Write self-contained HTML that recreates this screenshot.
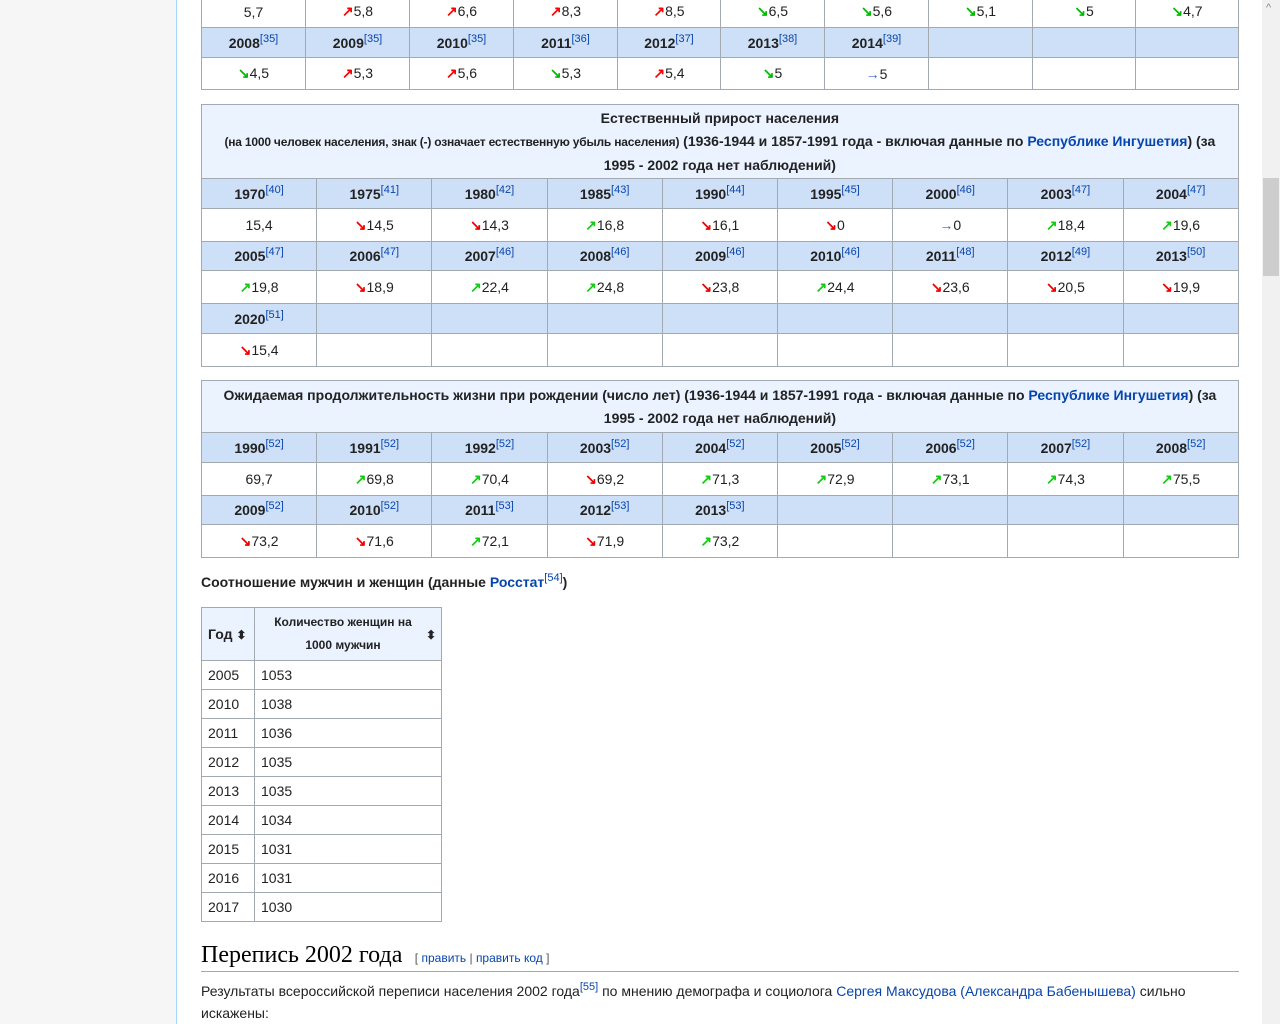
<!DOCTYPE html>
<html><head><meta charset="utf-8"><style>
body{margin:0;width:1280px;height:1024px;overflow:hidden;background:#f6f6f6;font-family:"Liberation Sans",sans-serif;color:#222;position:relative}
#content{position:absolute;left:176px;top:0;width:1086px;height:1024px;background:#fff;border-left:1px solid #a7d7f9}
#sb{position:absolute;left:1262px;top:0;width:18px;height:1024px;background:#f1f1f1}
#thumb{position:absolute;left:1263px;top:178px;width:16px;height:98px;background:#cdcdcd}
table{position:absolute;border-collapse:collapse;table-layout:fixed;font-size:14px}
td,th{border:1px solid #a2a9b1;text-align:center;padding:0;overflow:hidden;white-space:nowrap}
th{background:#cee0f8;font-weight:bold;font-size:14px}
tr.h{height:30px} tr.d{height:32px}
sup{font-size:11px;color:#0645ad;font-weight:normal;vertical-align:6px;line-height:0}
.u,.dn,.ug,.dr,.r{font-weight:bold}
.u{color:#f00}.dn{color:#0b0}.ug{color:#1c1}.dr{color:#e00}.r{color:#36c;font-weight:normal}
a{color:#0645ad;text-decoration:none}
.cap{background:#eaf3ff;font-weight:bold;line-height:23px;white-space:normal;padding:0 6px}
</style></head><body>
<div id="content"></div><div id="sb"><div style="position:absolute;left:4px;top:2px;font-size:11px;color:#888">^</div></div><div id="thumb"></div>

<table style="left:201px;top:-5px;width:1037px">
<colgroup><col style="width:104px"><col style="width:104px"><col style="width:104px"><col style="width:104px"><col style="width:103px"><col style="width:104px"><col style="width:104px"><col style="width:104px"><col style="width:103px"><col style="width:103px"></colgroup>
<tr class="d"><td>5,7</td><td><span class="u">↗</span>5,8</td><td><span class="u">↗</span>6,6</td><td><span class="u">↗</span>8,3</td><td><span class="u">↗</span>8,5</td><td><span class="dn">↘</span>6,5</td><td><span class="dn">↘</span>5,6</td><td><span class="dn">↘</span>5,1</td><td><span class="dn">↘</span>5</td><td><span class="dn">↘</span>4,7</td></tr>
<tr class="h"><th>2008<sup>[35]</sup></th><th>2009<sup>[35]</sup></th><th>2010<sup>[35]</sup></th><th>2011<sup>[36]</sup></th><th>2012<sup>[37]</sup></th><th>2013<sup>[38]</sup></th><th>2014<sup>[39]</sup></th><th></th><th></th><th></th></tr>
<tr class="d"><td><span class="dn">↘</span>4,5</td><td><span class="u">↗</span>5,3</td><td><span class="u">↗</span>5,6</td><td><span class="dn">↘</span>5,3</td><td><span class="u">↗</span>5,4</td><td><span class="dn">↘</span>5</td><td><span class="r">→</span>5</td><td></td><td></td><td></td></tr>
</table>

<table style="left:201px;top:104px;width:1037px">
<colgroup><col span="9" style="width:115.2px"></colgroup>
<tr style="height:74px"><td colspan="9" class="cap">Естественный прирост населения<br><span style="font-size:12px;letter-spacing:-0.2px">(на 1000 человек населения, знак (-) означает естественную убыль населения)</span> (1936-1944 и 1857-1991 года - включая данные по <a>Республике Ингушетия</a>) (за<br>1995 - 2002 года нет наблюдений)</td></tr>
<tr class="h"><th>1970<sup>[40]</sup></th><th>1975<sup>[41]</sup></th><th>1980<sup>[42]</sup></th><th>1985<sup>[43]</sup></th><th>1990<sup>[44]</sup></th><th>1995<sup>[45]</sup></th><th>2000<sup>[46]</sup></th><th>2003<sup>[47]</sup></th><th>2004<sup>[47]</sup></th></tr>
<tr style="height:33px"><td>15,4</td><td><span class="dr">↘</span>14,5</td><td><span class="dr">↘</span>14,3</td><td><span class="ug">↗</span>16,8</td><td><span class="dr">↘</span>16,1</td><td><span class="dr">↘</span>0</td><td><span class="r">→</span>0</td><td><span class="ug">↗</span>18,4</td><td><span class="ug">↗</span>19,6</td></tr>
<tr style="height:29px"><th>2005<sup>[47]</sup></th><th>2006<sup>[47]</sup></th><th>2007<sup>[46]</sup></th><th>2008<sup>[46]</sup></th><th>2009<sup>[46]</sup></th><th>2010<sup>[46]</sup></th><th>2011<sup>[48]</sup></th><th>2012<sup>[49]</sup></th><th>2013<sup>[50]</sup></th></tr>
<tr style="height:33px"><td><span class="ug">↗</span>19,8</td><td><span class="dr">↘</span>18,9</td><td><span class="ug">↗</span>22,4</td><td><span class="ug">↗</span>24,8</td><td><span class="dr">↘</span>23,8</td><td><span class="ug">↗</span>24,4</td><td><span class="dr">↘</span>23,6</td><td><span class="dr">↘</span>20,5</td><td><span class="dr">↘</span>19,9</td></tr>
<tr class="h"><th>2020<sup>[51]</sup></th><th></th><th></th><th></th><th></th><th></th><th></th><th></th><th></th></tr>
<tr style="height:33px"><td><span class="dr">↘</span>15,4</td><td></td><td></td><td></td><td></td><td></td><td></td><td></td><td></td></tr>
</table>

<table style="left:201px;top:380px;width:1037px">
<colgroup><col span="9" style="width:115.2px"></colgroup>
<tr style="height:52px"><td colspan="9" class="cap">Ожидаемая продолжительность жизни при рождении (число лет) (1936-1944 и 1857-1991 года - включая данные по <a>Республике Ингушетия</a>) (за<br>1995 - 2002 года нет наблюдений)</td></tr>
<tr class="h"><th>1990<sup>[52]</sup></th><th>1991<sup>[52]</sup></th><th>1992<sup>[52]</sup></th><th>2003<sup>[52]</sup></th><th>2004<sup>[52]</sup></th><th>2005<sup>[52]</sup></th><th>2006<sup>[52]</sup></th><th>2007<sup>[52]</sup></th><th>2008<sup>[52]</sup></th></tr>
<tr style="height:33px"><td>69,7</td><td><span class="ug">↗</span>69,8</td><td><span class="ug">↗</span>70,4</td><td><span class="dr">↘</span>69,2</td><td><span class="ug">↗</span>71,3</td><td><span class="ug">↗</span>72,9</td><td><span class="ug">↗</span>73,1</td><td><span class="ug">↗</span>74,3</td><td><span class="ug">↗</span>75,5</td></tr>
<tr style="height:29px"><th>2009<sup>[52]</sup></th><th>2010<sup>[52]</sup></th><th>2011<sup>[53]</sup></th><th>2012<sup>[53]</sup></th><th>2013<sup>[53]</sup></th><th></th><th></th><th></th><th></th></tr>
<tr style="height:33px"><td><span class="dr">↘</span>73,2</td><td><span class="dr">↘</span>71,6</td><td><span class="ug">↗</span>72,1</td><td><span class="dr">↘</span>71,9</td><td><span class="ug">↗</span>73,2</td><td></td><td></td><td></td><td></td></tr>
</table>

<div style="position:absolute;left:201px;top:574px;font-size:14px;font-weight:bold">Соотношение мужчин и женщин (данные <a>Росстат</a><sup>[54]</sup>)</div>

<table style="left:201px;top:607px;width:240px">
<colgroup><col style="width:53px"><col style="width:187px"></colgroup>
<tr style="height:53px"><th style="background:#eaf3ff;text-align:left;padding-left:6px">Год <span style="font-size:12px">⬍</span></th><th style="background:#eaf3ff;font-size:12px;line-height:23px;white-space:normal;position:relative;padding:0 18px 0 8px">Количество женщин на 1000 мужчин<span style="position:absolute;right:5px;top:16px;font-size:12px">⬍</span></th></tr>
<tr style="height:29px"><td style="text-align:left;padding-left:6px">2005</td><td style="text-align:left;padding-left:6px">1053</td></tr>
<tr style="height:29px"><td style="text-align:left;padding-left:6px">2010</td><td style="text-align:left;padding-left:6px">1038</td></tr>
<tr style="height:29px"><td style="text-align:left;padding-left:6px">2011</td><td style="text-align:left;padding-left:6px">1036</td></tr>
<tr style="height:29px"><td style="text-align:left;padding-left:6px">2012</td><td style="text-align:left;padding-left:6px">1035</td></tr>
<tr style="height:29px"><td style="text-align:left;padding-left:6px">2013</td><td style="text-align:left;padding-left:6px">1035</td></tr>
<tr style="height:29px"><td style="text-align:left;padding-left:6px">2014</td><td style="text-align:left;padding-left:6px">1034</td></tr>
<tr style="height:29px"><td style="text-align:left;padding-left:6px">2015</td><td style="text-align:left;padding-left:6px">1031</td></tr>
<tr style="height:29px"><td style="text-align:left;padding-left:6px">2016</td><td style="text-align:left;padding-left:6px">1031</td></tr>
<tr style="height:29px"><td style="text-align:left;padding-left:6px">2017</td><td style="text-align:left;padding-left:6px">1030</td></tr>
</table>

<div style="position:absolute;left:201px;top:942px;width:1038px;height:29px;border-bottom:1px solid #a2a9b1">
<span style="font-family:'Liberation Serif',serif;font-size:24px;color:#000">Перепись 2002 года</span>
<span style="font-size:12px;color:#555;margin-left:8px">[ <a>править</a> | <a>править код</a> ]</span></div>
<div style="position:absolute;left:201px;top:980px;width:1030px;font-size:14px;line-height:22px">Результаты всероссийской переписи населения 2002 года<sup>[55]</sup> по мнению демографа и социолога <a>Сергея Максудова (Александра Бабенышева)</a> сильно искажены:</div>
</body></html>
